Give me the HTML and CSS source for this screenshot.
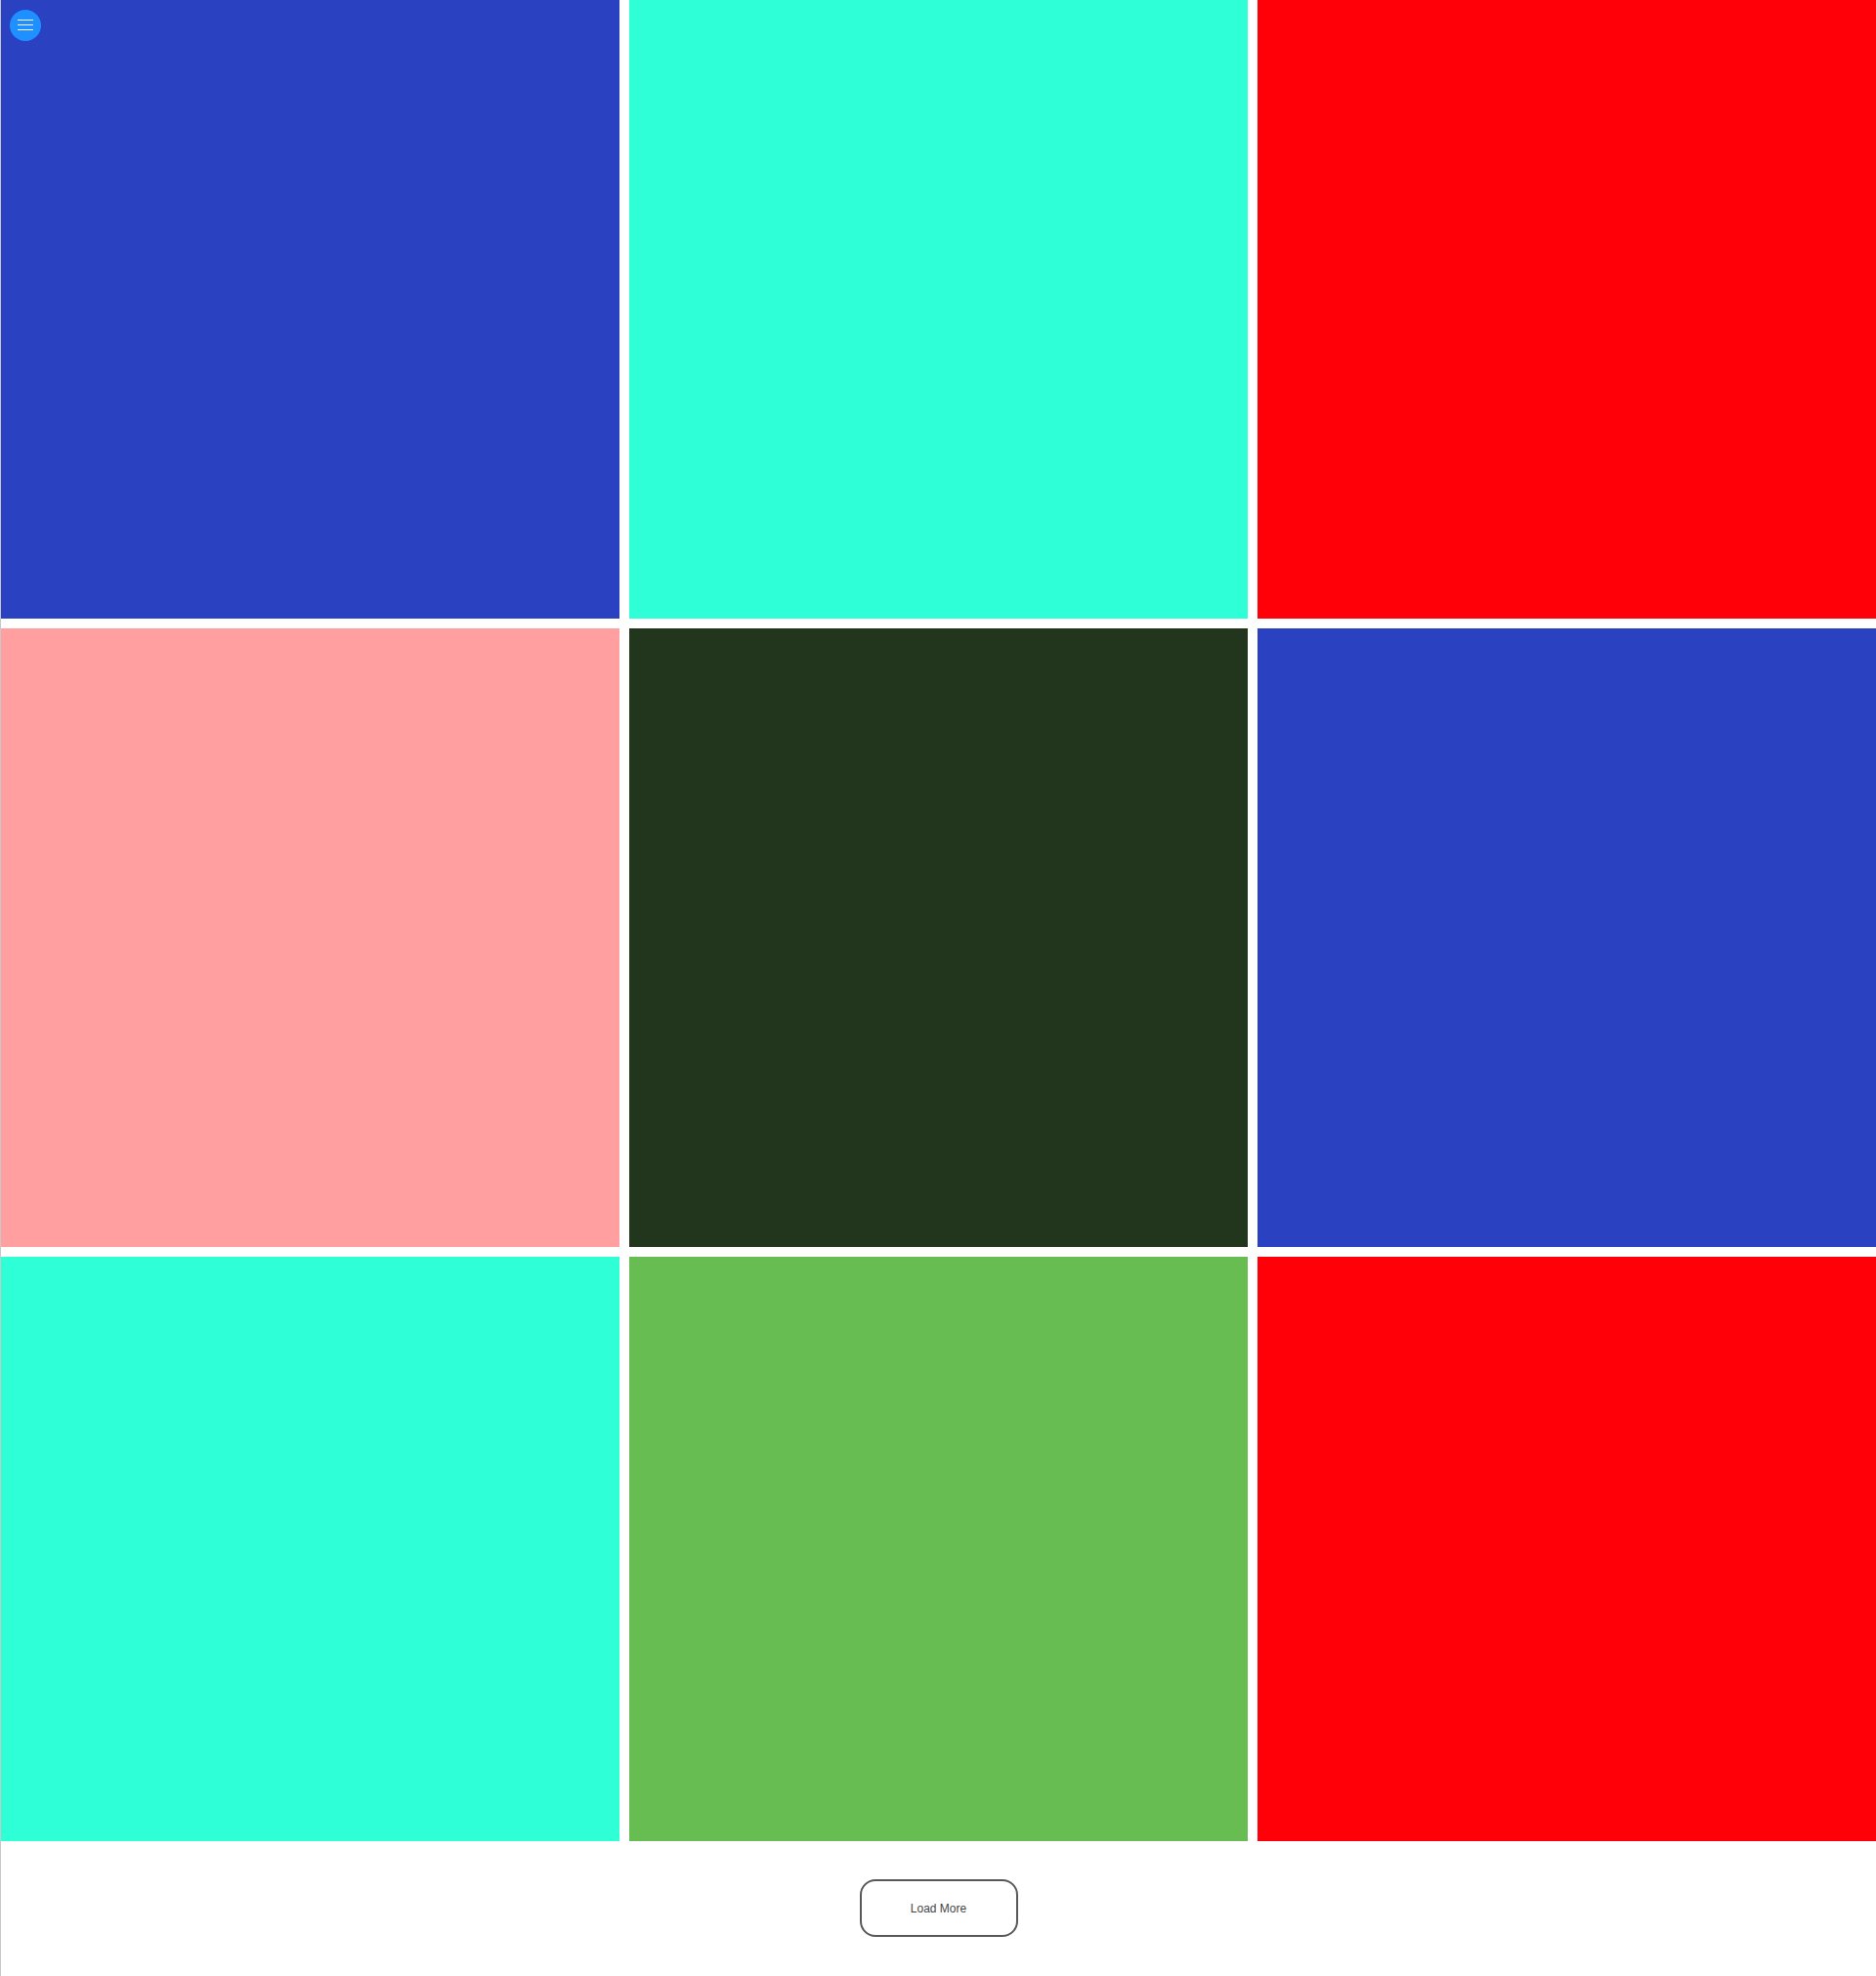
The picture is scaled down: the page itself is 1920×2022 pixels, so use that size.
FILE: index.html
```html
<!DOCTYPE html>
<html>
<head>
<meta charset="utf-8">
<link rel="stylesheet" href="styles.css">
</head>
<body>
<div class="page">
  <button class="menu-btn" aria-label="Menu">
    <svg width="16" height="12" viewBox="0 0 16 12"><path d="M0 0.5H16M0 5.5H16M0 10.5H16" stroke="#fff" stroke-width="1.2"/></svg>
  </button>
  <div class="grid">
    <div class="tile blue"></div>
    <div class="tile teal"></div>
    <div class="tile red"></div>
    <div class="tile pink"></div>
    <div class="tile dark"></div>
    <div class="tile blue"></div>
    <div class="tile teal"></div>
    <div class="tile green"></div>
    <div class="tile red"></div>
  </div>
  <div class="footer">
    <button class="load-more">Load More</button>
  </div>
</div>
</body>
</html>
```
FILE: styles.css
```css
html, body {
  margin: 0;
  padding: 0;
  background: #fff;
}
.page {
  position: relative;
  min-height: 2022px;
  border-left: 1px solid #c8c8c8;
  box-sizing: border-box;
  font-family: "Liberation Sans", Arial, sans-serif;
}
.menu-btn {
  position: absolute;
  left: 9px;
  top: 10px;
  width: 32px;
  height: 32px;
  border-radius: 50%;
  background: #1e90ff;
  border: none;
  padding: 0;
  display: flex;
  align-items: center;
  justify-content: center;
  z-index: 2;
}
.grid {
  display: grid;
  grid-template-columns: repeat(3, 1fr);
  grid-template-rows: 633px 633px 598px;
  gap: 10px;
}
.blue { background: #2a41c1; }
.teal { background: #2effd6; }
.red { background: #ff0008; }
.pink { background: #ff9fa0; }
.dark { background: #22351d; }
.green { background: #68bd52; }
.footer {
  display: flex;
  justify-content: center;
  padding-top: 39px;
}
.load-more {
  width: 162px;
  height: 59px;
  border: 2px solid #58585c;
  border-radius: 16px;
  background: #fff;
  color: #444;
  font-family: "Liberation Sans", Arial, sans-serif;
  font-size: 12px;
  padding: 0;
}
```
